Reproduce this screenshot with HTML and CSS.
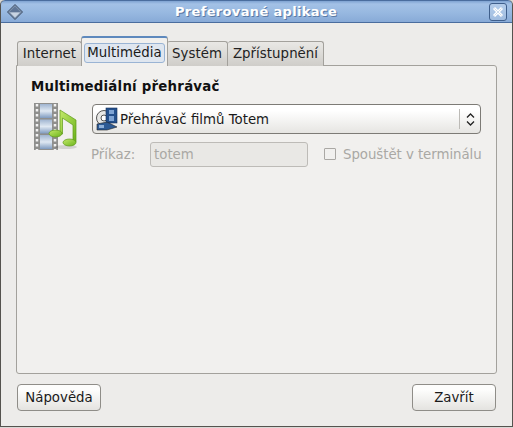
FILE: index.html
```html
<!DOCTYPE html>
<html lang="cs">
<head>
<meta charset="utf-8">
<title>Preferované aplikace</title>
<link rel="stylesheet" href="styles.css">
</head>
<body>
<div class="window">
  <header class="titlebar">
    <svg class="menu-icon" width="18" height="18" viewBox="0 0 18 18"><path d="M9 1.500 16.500 9 9 16.500 1.500 9Z" fill="#7f93ad" stroke="#3f4f68"/><path d="M3.500 9 9 3.500 14.500 9Z" fill="#5f7596"/><path d="M4 9.500H14L9 14.500Z" fill="#c9d4e3"/></svg>
    <span class="title">Preferované aplikace</span>
    <span class="close"><svg width="12" height="12" viewBox="0 0 12 12"><path d="M2 2 10 10M10 2 2 10" stroke="#fff" stroke-width="3"/><path d="M2.500 2.500 9.500 9.500M9.500 2.500 2.500 9.500" stroke="#9db8da" stroke-width=".5"/></svg></span>
  </header>
  <main class="content">
    <div class="notebook">
      <nav class="tabs">
        <div class="tab tab-internet">Internet</div>
        <div class="tab tab-active"><span class="focus">Multimédia</span></div>
        <div class="tab tab-system">Systém</div>
        <div class="tab tab-access">Zpřístupnění</div>
      </nav>
      <section class="panel">
        <h2 class="heading">Multimediální přehrávač</h2>
        <div class="app-row">
          <svg class="app-icon" width="48" height="50" viewBox="0 0 48 50">
            <defs>
              <linearGradient id="film" x1="0" y1="0" x2="0" y2="1"><stop offset="0" stop-color="#9fb4d0"/><stop offset=".5" stop-color="#dfe8f2"/><stop offset="1" stop-color="#7f9bc0"/></linearGradient>
              <linearGradient id="note" x1="0" y1="0" x2="1" y2="1"><stop offset="0" stop-color="#c4e96a"/><stop offset="1" stop-color="#6ab31a"/></linearGradient>
            </defs>
            <rect x="1" y="2" width="24" height="47" fill="#8f8f8d"/>
            <rect x="7" y="3" width="12" height="14" fill="url(#film)"/>
            <rect x="7" y="18.500" width="12" height="14" fill="url(#film)"/>
            <rect x="7" y="34" width="12" height="14" fill="url(#film)"/>
            <path d="M4 3V49M22 3V49" stroke="#f2f2f2" stroke-width="2.500" stroke-dasharray="2.500 2.500"/>
            <ellipse cx="33" cy="46" rx="11" ry="2" fill="#000" opacity=".12"/>
            <path d="M27 9 43 19V41H40V24L29.500 17V33H27Z" fill="url(#note)" stroke="#5f9a18" stroke-width=".7"/>
            <ellipse cx="22.500" cy="32.500" rx="6.500" ry="3.500" fill="url(#note)" stroke="#5f9a18" stroke-width=".7"/>
            <ellipse cx="36.500" cy="41.500" rx="6.500" ry="3.500" fill="url(#note)" stroke="#5f9a18" stroke-width=".7"/>
          </svg>
          <div class="app-fields">
            <div class="combo">
              <svg class="combo-icon" width="24" height="24" viewBox="0 0 24 24">
                <circle cx="8" cy="11" r="7.500" fill="#e8e8e6" stroke="#555"/>
                <circle cx="8" cy="11" r="3" fill="#fff" stroke="#555"/>
                <rect x="10" y="1" width="11" height="15" fill="#24508c" stroke="#14305a" stroke-width=".6"/>
                <rect x="13" y="3" width="5" height="4" fill="#7fa4d4"/>
                <rect x="13" y="9" width="5" height="5" fill="#7fa4d4"/>
                <path d="M1 17 11 15 21 20 11 23H1Z" fill="#2d5a94" stroke="#222" stroke-width=".6"/>
                <path d="M3 18H8V21H3Z" fill="#8fb0d8"/>
              </svg>
              <span class="combo-label">Přehrávač filmů Totem</span>
              <span class="combo-arrows">
                <svg width="9" height="15" viewBox="0 0 9 15"><path d="M1 5.500 4.500 2 8 5.500M1 9.500 4.500 13 8 9.500" fill="none" stroke="#222" stroke-width="1.300"/></svg>
              </span>
            </div>
            <div class="command-row">
              <span class="muted command-label">Příkaz:</span>
              <span class="entry">totem</span>
              <span class="check"></span>
              <span class="muted check-label">Spouštět v terminálu</span>
            </div>
          </div>
        </div>
      </section>
    </div>
    <footer class="actions">
      <button class="btn" type="button">Nápověda</button>
      <button class="btn" type="button">Zavřít</button>
    </footer>
  </main>
</div>
</body>
</html>
```

FILE: styles.css
```css
* { box-sizing: border-box; }
html, body { margin: 0; height: 100%; }
body { font-family: "DejaVu Sans", sans-serif; font-size: 13.33px; color: #1a1a1a; background: #d9d8d5; }
.window {
  width: 513px; height: 427px; display: flex; flex-direction: column;
  background: #edecea; border: 1px solid #55534f; border-top: 0;
  border-radius: 5px 5px 0 0; overflow: hidden;
}
.titlebar {
  height: 23px; flex: none; display: flex; align-items: center; justify-content: space-between;
  padding: 0 5px 0 5px; margin: 0 -1px;
  background: linear-gradient(#7fa3d2 0, #a3c1e6 3px, #97b8e0 12px, #86a9d6 22px);
  border: 1px solid #4a6d9e; border-radius: 5px 5px 0 0;
}
.title { font-weight: bold; font-size: 13px; letter-spacing: .34px; color: #fff; text-shadow: 1px 1px 0 #5a7aa4; margin-right: 1px; }
.close {
  width: 18px; height: 18px; display: flex; align-items: center; justify-content: center;
  border: 1px solid #3f5f8c; border-radius: 3px; background: rgba(255, 255, 255, .18);
}
.content { flex: 1; display: flex; flex-direction: column; padding: 13px 15px 15px; }
.notebook { flex: 1; display: flex; flex-direction: column; }
.tabs { height: 30px; display: flex; align-items: flex-end; padding-left: 1px; position: relative; z-index: 1; margin-bottom: -1px; letter-spacing: .05px; }
.tab {
  height: 25px; padding-top: 4px; text-align: center; border: 1px solid #a3a19c; border-bottom: 0; border-left: 0;
  border-radius: 3px 3px 0 0; background: linear-gradient(#e9e8e5, #cfcdc9); color: #222;
}
.tab-internet { width: 65px; border-left: 1px solid #a3a19c; }
.tab-system { width: 61px; }
.tab-access { width: 96px; }
.tab-active {
  width: 87px; height: 30px; padding: 5px 2px 0; background: #f1f0ee;
  border: 1px solid #a3a19c; border-top: 2px solid #5e89bd; border-bottom: 0; margin-left: -1px; margin-right: -1px;
  position: relative; z-index: 1;
}
.focus {
  display: block; height: 20px; line-height: 17px; background: #dfe6ef; border: 1px solid #9ab4d4; border-radius: 3px; color: #1a1a1a;
}
.panel { flex: 1; background: #f1f0ee; border: 1px solid #a3a19c; border-radius: 0 3px 3px 3px; padding: 13px 14px; }
.heading { margin: 0 0 9px; font-size: 13.33px; font-weight: bold; line-height: 16px; color: #111; letter-spacing: .23px; }
.app-row { display: flex; gap: 11px; }
.app-icon { flex: none; margin: -3px 0 0 2px; }
.app-fields { width: 389px; }
.combo {
  height: 30px; display: flex; align-items: center; padding-left: 3px; border: 1px solid #7d7b76; border-radius: 4px;
  background: linear-gradient(#fff 20%, #e6e5e2); color: #1a1a1a;
}
.combo-icon { flex: none; }
.combo-label { flex: 1; }
.combo-arrows { width: 21px; height: 20px; border-left: 1px solid #bcbab6; display: flex; align-items: center; justify-content: center; }
.command-row { display: flex; align-items: center; height: 26px; margin-top: 7px; }
.muted { color: #a9a8a4; }
.command-label { flex: none; width: 59px; margin-left: -1px; }
.entry {
  flex: none; width: 158px; height: 25px; line-height: 23px; padding-left: 3px; color: #a9a8a4;
  background: #e9e8e5; border: 1px solid #bdbbb7; border-radius: 3px; margin-right: 16px;
}
.check { flex: none; width: 12px; height: 12px; border: 1px solid #aaa8a4; border-radius: 1px; background: #f1f0ee; margin-right: 7px; }
.check-label { white-space: nowrap; letter-spacing: -.05px; }
.actions { display: flex; justify-content: space-between; margin-top: 10px; padding: 0 1px; }
.btn {
  width: 84px; height: 27px; padding: 0; font: inherit; color: #1a1a1a; border: 1px solid #8f8d88; border-radius: 4px;
  background: linear-gradient(#fdfdfc 20%, #e4e3e0);
}
```
